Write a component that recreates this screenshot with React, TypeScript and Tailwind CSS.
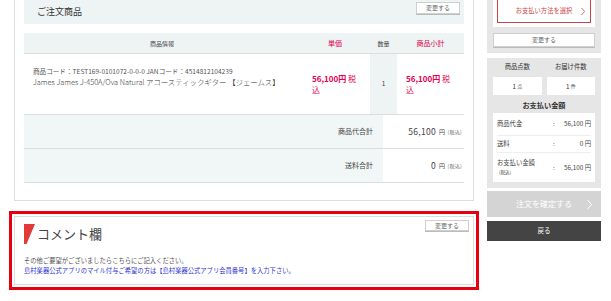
import React from 'react'

const red = 'text-[#e2004f]'

function Chevron({ className }: { className?: string }) {
  return (
    <svg viewBox="0 0 6 12" className={className} fill="none" stroke="currentColor" strokeWidth="1.2">
      <polyline points="0.5,0.5 5.5,6 0.5,11.5" />
    </svg>
  )
}

function SmallButton({ className = '' }: { className?: string }) {
  return (
    <button className={`bg-white border border-[#cfcfcf] shadow-[0_1px_0_#bbb] text-[6px] text-[#666] leading-none flex items-center justify-center ${className}`}>
      変更する
    </button>
  )
}

function OrderCard() {
  return (
    <div className="mx-[5px] border border-t-0 border-[#dddddd] px-[9px] pb-[17px]">
      <div className="h-[24px] bg-[#eef3f3] flex justify-between pl-[13px] pr-[4px]">
        <h2 className="self-center text-[9px] text-[#333]">ご注文商品</h2>
        <SmallButton className="mt-[2px] w-[44px] h-[12px]" />
      </div>

      <div className="mt-[9px] text-[7px]">
        <div className="flex h-[21px] items-center bg-[#eef4f4] border-b border-[#dddddd]">
          <div className="w-[276px] text-center text-[6px] text-[#444]">商品情報</div>
          <div className={`w-[70px] text-center ${red}`}>単価</div>
          <div className="w-[27px] text-center text-[6px] text-[#444]">数量</div>
          <div className={`flex-1 text-center ${red}`}>商品小計</div>
        </div>

        <div className="flex h-[61px] border-b border-[#dddddd]">
          <div className="w-[276px] pl-[9px] pt-[11px]">
            <p className="text-[6.6px] leading-[12px] text-[#555] whitespace-nowrap">
              商品コード：TEST169-0101072-0-0-0 JANコード：4514812104239
            </p>
            <p className="text-[7.4px] leading-[10px] text-[#3a3a3a] font-light whitespace-nowrap">
              James James J-450A/Ova Natural アコースティックギター 【ジェームス】
            </p>
          </div>
          <div className="w-[70px] pl-[12px] flex items-center">
            <p className={`w-[48px] leading-[11px] ${red} text-[8px]`}>
              <span className="font-bold">56,100円</span> 税込
            </p>
          </div>
          <div className="w-[27px] bg-[#eef4f4] flex items-center justify-center text-[6.5px] text-[#444]">1</div>
          <div className="flex-1 pl-[9px] flex items-center">
            <p className={`w-[48px] leading-[11px] ${red} text-[8px]`}>
              <span className="font-bold">56,100円</span> 税込
            </p>
          </div>
        </div>

        {[
          ['商品代合計', '56,100'],
          ['送料合計', '0'],
        ].map(([label, value]) => (
          <div key={label} className="flex h-[34px] border-b border-[#dddddd]">
            <div className="w-[359px] bg-[#f1f6f6] flex items-center justify-end pr-[10px] text-[7px] text-[#444]">
              {label}
            </div>
            <div className="flex-1 flex items-center justify-end pr-[2px] text-[8.5px] tracking-[0.3px] text-[#444]">
              {value} <span className="ml-[3px] text-[6px]">円</span>
              <span className="ml-[2px] text-[5px] text-[#666]">(税込)</span>
            </div>
          </div>
        ))}
      </div>
    </div>
  )
}

function CommentBox() {
  return (
    <div className="mt-[10px] border-[3px] border-[#e60012] p-[2px]">
      <div className="border border-[#dddddd] pt-[3px] pr-[4px] pl-[9px] pb-[8px]">
        <div className="flex justify-between items-start">
          <div className="mt-[4px] flex items-center gap-[2px]">
            <svg viewBox="0 0 11 20" className="w-[11px] h-[20px]">
              <polygon points="0,0 11,0 2.5,20 0,20" fill="#e03a3a" />
            </svg>
            <h2 className="text-[13px] leading-[20px] text-[#444]">コメント欄</h2>
          </div>
          <SmallButton className="w-[44px] h-[11px]" />
        </div>
        <div className="mt-[12px] text-[6.3px] leading-[10px] whitespace-nowrap">
          <p className="text-[#555]">その他ご要望がございましたらこちらにご記入ください。</p>
          <p className="text-[#2f35d0]">
            島村楽器公式アプリのマイル付与ご希望の方は【島村楽器公式アプリ会員番号】を入力下さい。
          </p>
        </div>
      </div>
    </div>
  )
}

function Sidebar() {
  return (
    <div className="w-[114px] flex flex-col">
      <div className="bg-[#e6e6e6] px-[6px] pb-[6px]">
        <div className="bg-white px-[4px] pb-[4px]">
          <button className="w-full h-[23px] border border-t-0 border-[#c94444] text-[#c94444] text-[6.3px] flex items-center justify-center relative">
            お支払い方法を選択
            <Chevron className="absolute right-[5px] w-[4px] h-[9px]" />
          </button>
        </div>
        <SmallButton className="mt-[6px] w-full h-[14px]" />
      </div>

      <div className="mt-[5px] bg-[#e6e6e6] px-[6px] pt-[4px] pb-[6px] text-[#333]">
        <div className="grid grid-cols-2 gap-x-[5px] text-[6.3px] leading-[10px] text-center">
          <div>商品点数</div>
          <div>お届け件数</div>
          <div className="mt-[5px] h-[18px] bg-white flex items-center justify-center text-[7px] text-[#444]">
            1<span className="ml-[1px] text-[5px]">点</span>
          </div>
          <div className="mt-[5px] h-[18px] bg-white flex items-center justify-center text-[7px] text-[#444]">
            1<span className="ml-[1px] text-[5px]">件</span>
          </div>
        </div>
        <div className="mt-[4px] text-center text-[7.2px] font-bold leading-[12px]">お支払い金額</div>
        <div className="mt-[2px] bg-white px-[4px] text-[6.3px] text-[#444]">
          <div className="h-[23px] flex items-center border-b border-[#eeeeee]">
            <span className="w-[52px]">商品代金</span>
            <span className="w-[10px] text-center">:</span>
            <span className="flex-1 text-right">56,100 円</span>
          </div>
          <div className="h-[17px] flex items-center border-b border-[#eeeeee]">
            <span className="w-[52px]">送料</span>
            <span className="w-[10px] text-center">:</span>
            <span className="flex-1 text-right">0 円</span>
          </div>
          <div className="h-[29px] flex items-center">
            <span className="w-[52px] leading-[9px]">
              お支払い金額
              <br />
              <span className="pl-[2px] text-[4.5px]">(税込)</span>
            </span>
            <span className="w-[10px] text-center">:</span>
            <span className="flex-1 text-right">56,100 円</span>
          </div>
        </div>
      </div>

      <button className="mt-[3px] h-[26px] bg-[#d4d4d4] text-white text-[8px] flex items-center justify-center relative">
        注文を確定する
        <Chevron className="absolute right-[9px] w-[5px] h-[11px]" />
      </button>
      <button className="mt-[4px] h-[20px] bg-[#444444] text-white text-[6.5px] flex items-center justify-center">
        戻る
      </button>
    </div>
  )
}

export default function App() {
  return (
    <div className="w-[611px] h-[301px] overflow-hidden bg-white font-['Noto_Sans_CJK_JP','Noto_Sans',sans-serif] flex gap-[8px] pl-[9px]">
      <div className="w-[470px] flex flex-col">
        <OrderCard />
        <CommentBox />
      </div>
      <Sidebar />
    </div>
  )
}
